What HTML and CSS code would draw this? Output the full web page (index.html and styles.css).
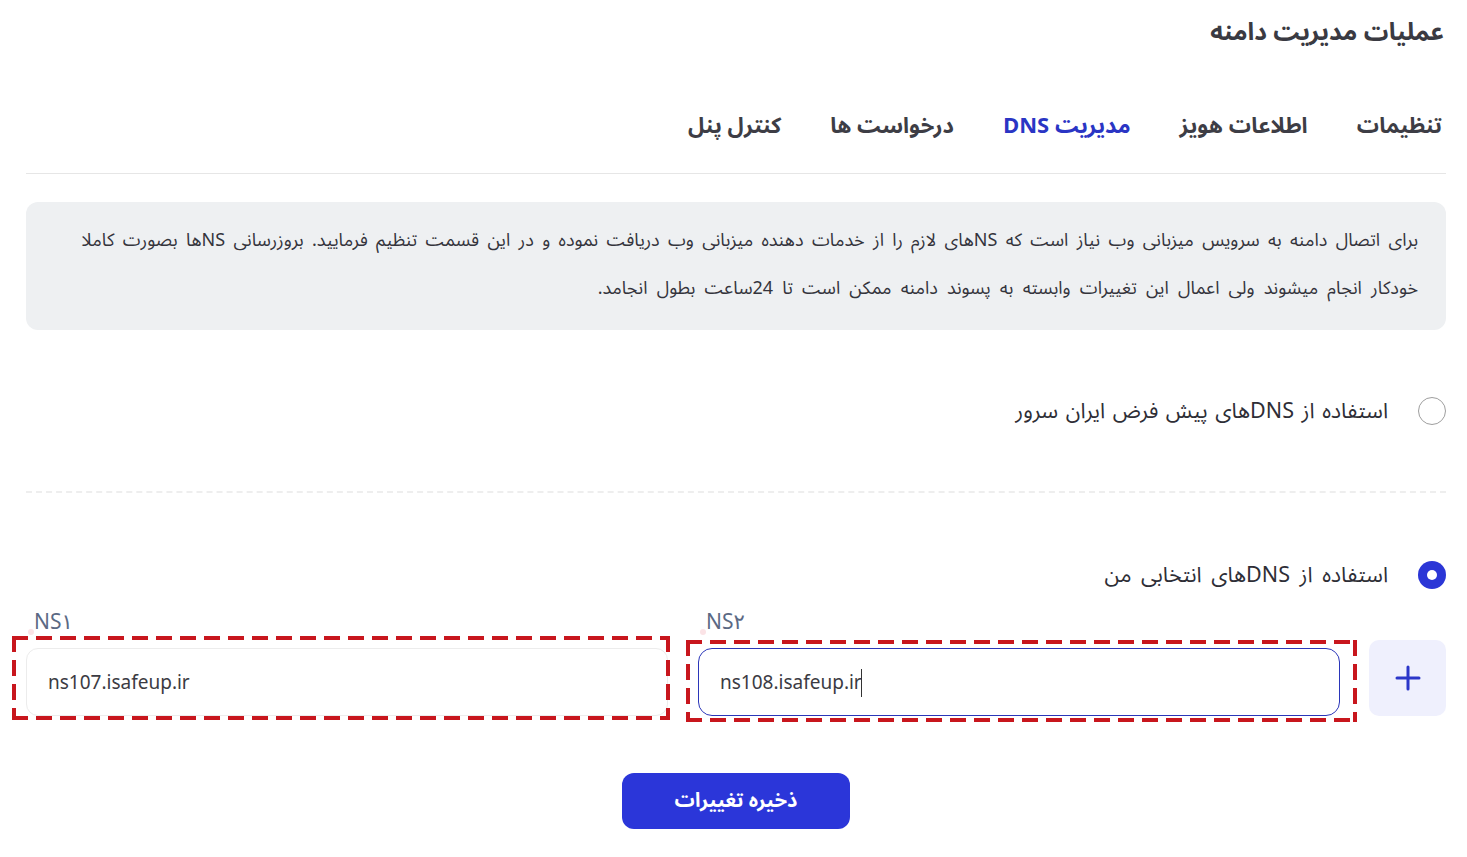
FILE: index.html
```html
<!DOCTYPE html>
<html lang="fa" dir="rtl">
<head>
<meta charset="utf-8">
<title>عملیات مدیریت دامنه</title>
<link rel="stylesheet" href="styles.css">
</head>
<body>
<div class="page">
  <h1 class="title">عملیات مدیریت دامنه</h1>
  <nav class="tabs">
    <a class="tab">تنظیمات</a>
    <a class="tab">اطلاعات هویز</a>
    <a class="tab active">مدیریت DNS</a>
    <a class="tab">درخواست ها</a>
    <a class="tab">کنترل پنل</a>
  </nav>
  <div class="info">
    <p><span class="l1">برای اتصال دامنه به سرویس میزبانی وب نیاز است که NSهای لازم را از خدمات دهنده میزبانی وب دریافت نموده و در این قسمت تنظیم فرمایید. بروزرسانی NSها بصورت کاملا</span><br><span class="l2">خودکار انجام میشوند ولی اعمال این تغییرات وابسته به پسوند دامنه ممکن است تا 24ساعت بطول انجامد.</span></p>
  </div>
  <label class="option first">
    <span class="radio"></span>
    <span class="opt-text">استفاده از DNSهای پیش فرض ایران سرور</span>
  </label>
  <div class="divider"></div>
  <label class="option second">
    <span class="radio checked"></span>
    <span class="opt-text">استفاده از DNSهای انتخابی من</span>
  </label>
  <div class="ns-row">
    <div class="ns-col">
      <div class="ns-label"><span class="dot"></span>NS۱</div>
      <div class="field mark1"><input class="input" value="ns107.isafeup.ir"></div>
    </div>
    <div class="ns-col">
      <div class="ns-label"><span class="dot"></span>NS۲</div>
      <div class="field mark2"><input class="input focus" value="ns108.isafeup.ir"><span class="caret"></span></div>
    </div>
    <button class="add">
      <svg width="28" height="28" viewBox="0 0 28 28"><path d="M14 3v22M3 14h22" stroke="#2b36c9" stroke-width="3" stroke-linecap="round"/></svg>
    </button>
  </div>
  <div class="actions">
    <button class="save">ذخیره تغییرات</button>
  </div>
</div>
</body>
</html>
```

FILE: styles.css
```css
* { box-sizing: border-box; }
html, body { margin: 0; padding: 0; background: #fff; }
body {
  font-family: "Noto Sans Arabic", "Noto Naskh Arabic", "DejaVu Sans", sans-serif;
  color: #33333b;
}
.page {
  padding: 14px 21px 0 26px;
}
.title {
  margin: 0;
  font-size: 24.5px;
  line-height: 36px;
  font-weight: 700;
  color: #3a3a42;
  padding-right: 2px;
}
.tabs {
  display: flex;
  gap: 49px;
  margin-top: 50px;
  padding: 11px 4px 0;
  border-bottom: 1px solid #e6e6e6;
  height: 74px;
  align-items: flex-start;
}
.tab {
  font-size: 22px;
  font-weight: 700;
  color: #3d3d45;
  line-height: 30px;
  cursor: pointer;
}
.tab.active { color: #2a35c4; }
.info {
  margin-top: 28px;
  background: #eef0f2;
  border-radius: 12px;
  height: 128px;
  padding: 14px 28px 0 24px;
}
.info p {
  margin: 0;
  font-size: 18px;
  line-height: 48px;
  color: #34343c;
  white-space: nowrap;
}
.l1 { word-spacing: 3.7px; }
.l2 { word-spacing: 4.5px; }
.option {
  display: flex;
  align-items: center;
  gap: 30px;
  height: 32px;
}
.option.first { margin-top: 65px; }
.option.second { margin-top: 66px; }
.radio {
  width: 28px;
  height: 28px;
  border-radius: 50%;
  border: 1.5px solid #9e9e9e;
  flex: none;
  position: relative;
}
.radio.checked {
  border: none;
  background: #2b36d6;
}
.radio.checked::after {
  content: "";
  position: absolute;
  left: 9px;
  top: 9px;
  width: 10px;
  height: 10px;
  border-radius: 50%;
  background: #fff;
}
.opt-text {
  font-size: 21.5px;
  word-spacing: 2px;
  color: #2e2e36;
}
.option.second .opt-text { word-spacing: 4px; }
.divider {
  margin-top: 64px;
  border-top: 2px dashed #eeeeee;
}
.ns-row {
  direction: ltr;
  display: flex;
  align-items: flex-end;
  gap: 30px;
  margin-top: 16px;
}
.ns-col {
  flex: 1;
  display: flex;
  flex-direction: column;
}
.ns-label {
  position: relative;
  font-family: "Noto Sans", "DejaVu Sans", sans-serif;
  font-size: 21px;
  line-height: 28px;
  color: #5b6984;
  padding-left: 8px;
  margin-bottom: 13px;
}
.dot {
  position: absolute;
  left: 2px;
  bottom: 0;
  width: 6px;
  height: 6px;
  border-radius: 50%;
  background: #fbe3e6;
}
.field { position: relative; }
.field::after {
  content: "";
  position: absolute;
  pointer-events: none;
  background:
    repeating-linear-gradient(90deg, #c8161d 0 16px, transparent 16px 24px) top left / 100% 4px no-repeat,
    repeating-linear-gradient(90deg, #c8161d 0 16px, transparent 16px 24px) bottom left / 100% 4px no-repeat,
    repeating-linear-gradient(180deg, #c8161d 0 16px, transparent 16px 24px) top left / 4px 100% no-repeat,
    repeating-linear-gradient(180deg, #c8161d 0 16px, transparent 16px 24px) top right / 4px 100% no-repeat;
}
.mark1::after { left: -14px; right: -2px; top: -12px; bottom: -4px; }
.mark2::after { left: -12px; right: -17px; top: -8px; bottom: -6px; }
.input {
  display: block;
  width: 100%;
  height: 68px;
  border: 1px solid #ececec;
  border-radius: 12px;
  padding: 0 21px;
  font-family: "Noto Sans", "DejaVu Sans", sans-serif;
  font-size: 19px;
  color: #3b3b43;
  background: #fff;
  outline: none;
}
.input.focus {
  border-color: #2b36b9;
  border-radius: 14px;
}
.caret {
  position: absolute;
  left: 163px;
  top: 21px;
  width: 1px;
  height: 28px;
  background: #333;
}
.add {
  flex: none;
  width: 77px;
  height: 76px;
  margin-left: -1px;
  border: none;
  border-radius: 10px;
  background: #eff0fd;
  display: flex;
  align-items: center;
  justify-content: center;
  cursor: pointer;
}
.actions {
  display: flex;
  justify-content: center;
  margin-top: 57px;
}
.save {
  width: 228px;
  height: 56px;
  border: none;
  border-radius: 12px;
  background: #2b36d9;
  color: #fff;
  font-family: inherit;
  font-size: 20px;
  font-weight: 700;
  cursor: pointer;
}
```
